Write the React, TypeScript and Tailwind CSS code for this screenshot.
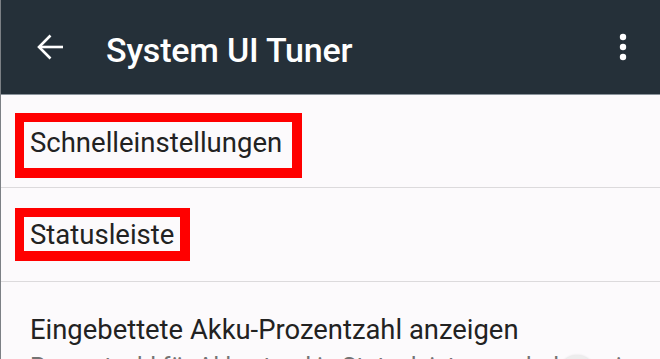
import React from "react";

export default function App() {
  return (
    <div
      className="w-[660px] h-[359px] overflow-hidden bg-[#fcfafc] border-l border-[#7c8085] flex flex-col"
      style={{ fontFamily: "Roboto, 'Noto Sans', sans-serif" }}
    >
      {/* App bar */}
      <div className="h-[95px] shrink-0 bg-[#253039] border-b border-[#8a939b] flex items-start">
        <div className="ml-[35px] mt-[33px] w-[28px] h-[28px]">
          <svg width="28" height="28" viewBox="0 0 28 28" fill="none">
            <path d="M27 14H3" stroke="#ffffff" strokeWidth="2.6" />
            <path d="M14.5 2.5L3 14l11.5 11.5" stroke="#ffffff" strokeWidth="2.6" />
          </svg>
        </div>
        <div className="ml-[42px] mt-[30px] text-[34px] leading-[40px] font-medium text-white tracking-[-0.2px]">
          System UI Tuner
        </div>
        <div className="ml-auto mr-[33px] mt-[31px]">
          <svg width="8" height="32" viewBox="0 0 8 32">
            <circle cx="4" cy="6" r="3.2" fill="#ffffff" />
            <circle cx="4" cy="16" r="3.2" fill="#ffffff" />
            <circle cx="4" cy="26" r="3.2" fill="#ffffff" />
          </svg>
        </div>
      </div>

      {/* Row 1 */}
      <div className="h-[93px] shrink-0 border-b border-[#dcdadc] pt-[18px] pl-[14px]">
        <div className="inline-flex items-start h-[65px] border-[9px] border-r-[10px] border-b-[10px] border-[#ff0000] pl-[6px] pr-[10px] pt-[4px]">
          <span className="text-[27.5px] leading-[33px] text-[#222222] whitespace-nowrap">
            Schnelleinstellungen
          </span>
        </div>
      </div>

      {/* Row 2 */}
      <div className="h-[94px] shrink-0 border-b border-[#dcdadc] pt-[20px] pl-[14px]">
        <div className="inline-flex items-start h-[53px] border-[9px] border-r-[10px] border-b-[10px] border-[#ff0000] pl-[6px] pr-[6px] pt-[1px]">
          <span className="text-[27.5px] leading-[33px] text-[#222222] whitespace-nowrap">
            Statusleiste
          </span>
        </div>
      </div>

      {/* Row 3 */}
      <div className="relative flex-1 pt-[32px] pl-[29px]">
        <div className="text-[27.4px] leading-[33px] text-[#222222] whitespace-nowrap">
          Eingebettete Akku-Prozentzahl anzeigen
        </div>
        <div className="mt-[5px] text-[24px] leading-[28px] text-[#737373] whitespace-nowrap">
          Prozentzahl für Akkustand in Statusleistensymbol anzeigen
        </div>
        <div className="absolute left-[558px] top-[73px] w-[36px] h-[36px] rounded-full bg-[#ededed] shadow-[0_1px_3px_rgba(0,0,0,0.25)]" />
      </div>
    </div>
  );
}
